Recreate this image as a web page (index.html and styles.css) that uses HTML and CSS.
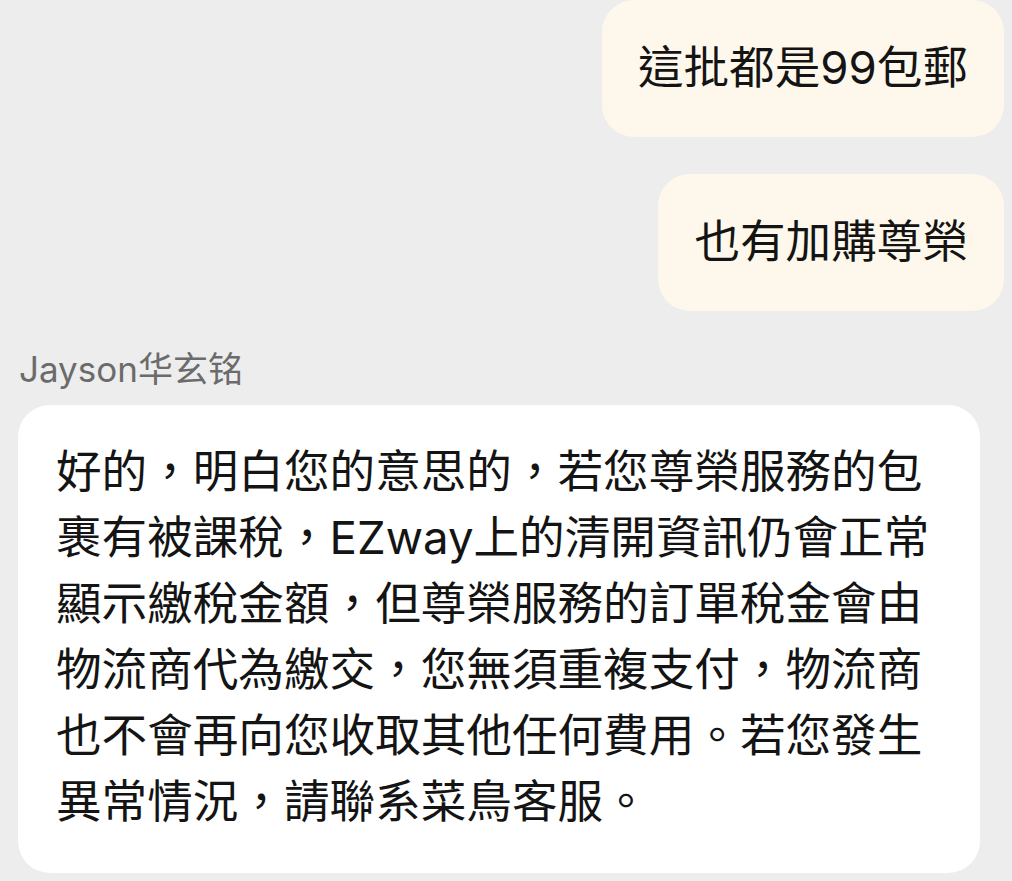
FILE: index.html
```html
<!DOCTYPE html>
<html lang="zh-Hant">
<head>
    <meta charset="UTF-8">
    <meta name="viewport" content="width=device-width, initial-scale=1.0">
    <title>Chat</title>
    <link rel="stylesheet" href="styles.css">
</head>
<body>

<main class="chat">
    <div class="msg msg-out">
        <div class="bubble bubble-out">這批都是99包郵</div>
    </div>

    <div class="msg msg-out">
        <div class="bubble bubble-out">也有加購尊榮</div>
    </div>

    <div class="msg msg-in">
        <div class="sender">Jayson华玄铭</div>
        <div class="bubble bubble-in">好的，明白您的意思的，若您尊榮服務的包裹有被課稅，EZway上的清開資訊仍會正常顯示繳稅金額，但尊榮服務的訂單稅金會由物流商代為繳交，您無須重複支付，物流商也不會再向您收取其他任何費用。若您發生異常情況，請聯系菜鳥客服。</div>
    </div>
</main>

</body>
</html>
```

FILE: styles.css
```css
* {
    margin: 0;
    padding: 0;
    box-sizing: border-box;
}

body {
    font-family: Inter, "Noto Sans CJK TC", sans-serif;
    background-color: #ededed;
    color: #141414;
}

.chat {
    display: flex;
    flex-direction: column;
    gap: 37px;
    padding: 0 8px 0 18px;
}

.msg {
    display: flex;
    flex-direction: column;
}

.msg-out {
    align-items: flex-end;
}

.msg-in {
    padding-right: 24px;
    margin-top: -3px;
}

.bubble {
    font-size: 45.6px;
    line-height: 66px;
    border-radius: 32px;
}

.bubble-out {
    background-color: #fdf8eb;
    padding: 35px 36px 36px;
}

.bubble-in {
    background-color: #ffffff;
    padding: 34px 36px 38px 38px;
}

.sender {
    font-size: 35px;
    line-height: 48px;
    color: #6b6b6b;
    padding-left: 1px;
    margin-bottom: 12px;
}
```
